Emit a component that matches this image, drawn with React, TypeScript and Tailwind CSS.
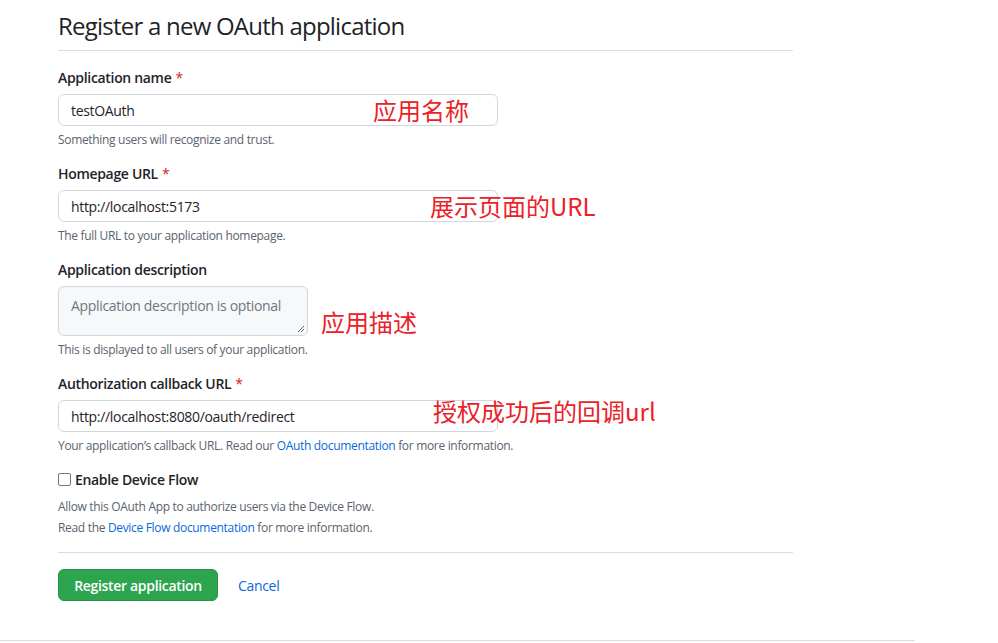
import React from "react";

const font = { fontFamily: '"Open Sans", "Noto Sans", "Noto Sans CJK SC", sans-serif' };
const cjk = { fontFamily: '"Noto Sans CJK SC", "Noto Sans", sans-serif' };

function Label({ children, required }: { children: React.ReactNode; required?: boolean }) {
  return (
    <label className="block text-[14px] leading-[21px] font-semibold text-[#1f2328] mb-[6px]">
      {children}
      {required && <span className="text-[#d1242f] ml-[4px] font-normal">*</span>}
    </label>
  );
}

function Hint({ children }: { children: React.ReactNode }) {
  return <p className="text-[12px] leading-[18px] text-[#59636e] mt-[5px]">{children}</p>;
}

function Input({ value }: { value: string }) {
  return (
    <div className="w-[440px] h-[32px] border border-[#d0d7de] rounded-[6px] bg-white flex items-center px-[12px] text-[14px] text-[#1f2328]">
      {value}
    </div>
  );
}

export default function App() {
  return (
    <div className="relative w-[998px] h-[643px] bg-white overflow-hidden tracking-[-0.02em]" style={font}>
      <div className="ml-[58px] w-[735px]">
        <div className="pt-[8px] pb-[6px] border-b border-[#d8dee4]">
          <h1 className="text-[24px] leading-[36px] font-normal text-[#1f2328] tracking-[-0.032em]">Register a new OAuth application</h1>
        </div>

        <div className="mt-[16px]">
          <Label required>Application name</Label>
          <Input value="testOAuth" />
          <Hint>Something users will recognize and trust.</Hint>
        </div>

        <div className="mt-[14px]">
          <Label required>Homepage URL</Label>
          <Input value="http://localhost:5173" />
          <Hint>The full URL to your application homepage.</Hint>
        </div>

        <div className="mt-[14px]">
          <Label>Application description</Label>
          <div className="relative w-[250px] h-[50px] border border-[#d0d7de] rounded-[6px] bg-[#f6f8fa] px-[12px] pt-[8px] text-[14px] text-[#6e7781]">
            Application description is optional
            <svg className="absolute right-[2px] bottom-[2px]" width="8" height="8" viewBox="0 0 8 8">
              <path d="M7 1L1 7M7 4L4 7" stroke="#666" strokeWidth="1" />
            </svg>
          </div>
          <Hint>This is displayed to all users of your application.</Hint>
        </div>

        <div className="mt-[14px]">
          <Label required>Authorization callback URL</Label>
          <Input value="http://localhost:8080/oauth/redirect" />
          <Hint>
            Your application’s callback URL. Read our{" "}
            <span className="text-[#0969da]">OAuth documentation</span> for more information.
          </Hint>
        </div>

        <div className="mt-[14px]">
          <div className="flex items-center h-[21px]">
            <span className="w-[13px] h-[13px] border border-[#767676] rounded-[2px] bg-white mr-[4px]" />
            <span className="text-[14px] font-semibold text-[#1f2328]">Enable Device Flow</span>
          </div>
          <p className="text-[12px] leading-[18px] text-[#59636e] mt-[8px]">Allow this OAuth App to authorize users via the Device Flow.</p>
          <p className="text-[12px] leading-[18px] text-[#59636e] mt-[3px]">
            Read the <span className="text-[#0969da]">Device Flow documentation</span> for more information.
          </p>
        </div>

        <div className="mt-[15px] border-t border-[#d8dee4]" />

        <div className="mt-[16px] flex items-center">
          <div className="h-[32px] w-[160px] flex items-center justify-center rounded-[6px] bg-[#2da44e] border border-[#2a9147] text-white text-[14px] font-semibold">
            Register application
          </div>
          <span className="ml-[20px] text-[14px] font-medium text-[#0969da]">Cancel</span>
        </div>
      </div>

      <div className="absolute left-0 top-[640px] w-[915px] border-t border-[#d8dee4]" />

      <span className="absolute left-[373px] top-[98px] text-[24px] leading-[24px] tracking-normal text-[#eb2128]" style={cjk}>应用名称</span>
      <span className="absolute left-[430px] top-[194px] text-[24px] leading-[24px] tracking-normal text-[#eb2128]" style={cjk}>展示页面的URL</span>
      <span className="absolute left-[321px] top-[310px] text-[24px] leading-[24px] tracking-normal text-[#eb2128]" style={cjk}>应用描述</span>
      <span className="absolute left-[433px] top-[399px] text-[24px] leading-[24px] tracking-normal text-[#eb2128]" style={cjk}>授权成功后的回调url</span>
    </div>
  );
}
